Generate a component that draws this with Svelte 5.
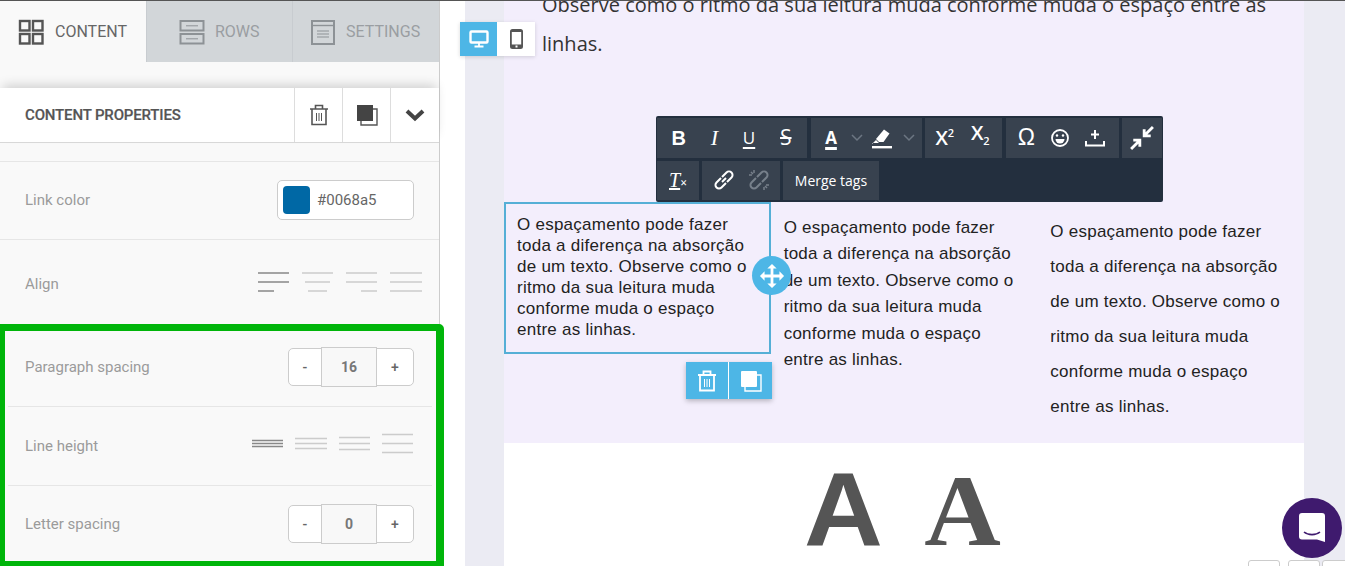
<script>
  const colText = 'O espaçamento pode fazer toda a diferença na absorção de um texto. Observe como o ritmo da sua leitura muda conforme muda o espaço entre as linhas.';
</script>

<div class="page">
  <aside class="panel">
    <nav class="tabs">
      <div class="tab active">
        <svg width="26" height="26" viewBox="0 0 26 26" fill="none" stroke="#555" stroke-width="2.4"><rect x="2" y="2" width="9.5" height="9.5"/><rect x="15" y="2" width="9.5" height="9.5"/><rect x="2" y="15" width="9.5" height="9.5"/><rect x="15" y="15" width="9.5" height="9.5"/></svg>
        <span>CONTENT</span>
      </div>
      <div class="tab">
        <svg width="26" height="26" viewBox="0 0 26 26" fill="none" stroke="#8d9296" stroke-width="2"><rect x="1.5" y="2" width="23" height="9.5"/><rect x="1.5" y="15" width="23" height="9.5"/><path d="M7 6.8h12M7 19.8h12" stroke-width="1"/></svg>
        <span>ROWS</span>
      </div>
      <div class="tab">
        <svg width="26" height="26" viewBox="0 0 26 26" fill="none" stroke="#8d9296" stroke-width="2"><rect x="2" y="2" width="22" height="23"/><path d="M2 6.5h22" stroke-width="1.4"/><path d="M7 12h12M7 15h12M7 18h12" stroke-width="1"/></svg>
        <span>SETTINGS</span>
      </div>
    </nav>

    <header class="props">
      <strong>CONTENT PROPERTIES</strong>
      <div class="act">
        <svg width="20" height="22" viewBox="0 0 20 22" fill="none" stroke="#555" stroke-width="1.6"><path d="M1 5h18M6.500 5V1.500h7V5M3 5v15.500h14V5"/><path d="M7.500 9v8M10 9v8M12.500 9v8" stroke-width="1"/></svg>
      </div>
      <div class="act">
        <svg width="22" height="22" viewBox="0 0 22 22"><path d="M5 5h16v16H5z" fill="none" stroke="#555" stroke-width="1.400"/><rect x="1" y="1" width="16" height="16" fill="#444"/></svg>
      </div>
      <div class="act">
        <svg width="20" height="14" viewBox="0 0 20 14" fill="none" stroke="#444" stroke-width="4"><path d="M2 3l8 7.500L18 3"/></svg>
      </div>
    </header>

    <div class="spacer"></div>

    <section class="row r78 up">
      <label>Link color</label>
      <div class="color"><i></i><span>#0068a5</span></div>
    </section>

    <section class="row r89 up">
      <label>Align</label>
      <div class="aligns">
        <svg width="32" height="20" viewBox="0 0 32 20" stroke="#888" stroke-width="1.600"><path d="M0 1h31M0 10h31M0 19h16"/></svg>
        <svg width="32" height="20" viewBox="0 0 32 20" stroke="#ccc" stroke-width="1.600"><path d="M0 1h31M3 10h25M6 19h19"/></svg>
        <svg width="32" height="20" viewBox="0 0 32 20" stroke="#ccc" stroke-width="1.600"><path d="M0 1h31M0 10h31M15 19h16"/></svg>
        <svg width="32" height="20" viewBox="0 0 32 20" stroke="#ccc" stroke-width="1.600"><path d="M0 1h32M0 10h32M0 19h32"/></svg>
      </div>
    </section>

    <section class="row r78 inset up">
      <label>Paragraph spacing</label>
      <div class="stepper"><button>-</button><b>16</b><button>+</button></div>
    </section>

    <section class="row r79 inset">
      <label>Line height</label>
      <div class="heights">
        <svg width="32" height="10" viewBox="0 0 32 10" stroke="#888" stroke-width="1.600"><path d="M0 1.500h31M0 4.500h31M0 7.500h31"/></svg>
        <svg width="33" height="14" viewBox="0 0 33 14" stroke="#ccc" stroke-width="1.600"><path d="M0 1.500h32M0 6.500h32M0 11.500h32"/></svg>
        <svg width="32" height="16" viewBox="0 0 32 16" stroke="#ccc" stroke-width="1.600"><path d="M0 1.500h31M0 7.500h31M0 13.500h31"/></svg>
        <svg width="32" height="21" viewBox="0 0 32 21" stroke="#ccc" stroke-width="1.600"><path d="M0 1.500h31M0 10.500h31M0 19.500h31"/></svg>
      </div>
    </section>

    <section class="row r78 inset last up">
      <label>Letter spacing</label>
      <div class="stepper"><button>-</button><b>0</b><button>+</button></div>
    </section>
  </aside>

  <main class="canvas">
    <div class="content">
      <div class="intro">
        <p>Observe como o ritmo da sua leitura muda conforme muda o espaço entre as linhas.</p>
      </div>
      <div class="cols">
        <div class="col c1"><p>{colText}</p></div>
        <div class="col c2"><p>{colText}</p></div>
        <div class="col c3"><p>{colText}</p></div>
      </div>
      <div class="letters"><span class="sans">A</span><span class="serif">A</span></div>
    </div>
  </main>

  <div class="devices">
    <div class="dev on">
      <svg width="20" height="18" viewBox="0 0 20 18" fill="none" stroke="#fff" stroke-width="2.400"><rect x="1.500" y="1.500" width="17" height="11" rx="1"/><path d="M10 13v3M5.500 16.500h9" stroke-width="1.800"/></svg>
    </div>
    <div class="dev">
      <svg width="13" height="20" viewBox="0 0 13 20"><path fill-rule="evenodd" fill="#555" d="M2.500 0h8A2.500 2.500 0 0 1 13 2.500v15a2.500 2.500 0 0 1-2.500 2.500h-8A2.500 2.500 0 0 1 0 17.500v-15A2.500 2.500 0 0 1 2.500 0zM1.800 3v12.500h9.400V3z"/><rect x="5.500" y="16.500" width="2" height="2" fill="#fff"/></svg>
    </div>
  </div>

  <div class="toolbar">
    <div class="tb-row">
      <div class="grp g1"><span class="bt b">B</span><span class="bt it">I</span><span class="bt u">U</span><span class="bt s">S</span></div>
      <div class="grp g2">
        <span class="bt u2">A</span>
        <svg class="chev" width="12" height="8" viewBox="0 0 12 8" fill="none" stroke="#6c7682" stroke-width="1.500"><path d="M1 1l5 5 5-5"/></svg>
        <svg class="pen" width="22" height="22" viewBox="0 0 22 22"><path d="M5 12L13 2.500l5.500 4-6 8.500H8z" fill="#fff"/><path d="M1 17l4-4 3 3H1z" fill="#fff"/><rect x="1" y="19" width="20" height="2.400" fill="#fff"/></svg>
        <svg class="chev" width="12" height="8" viewBox="0 0 12 8" fill="none" stroke="#6c7682" stroke-width="1.500"><path d="M1 1l5 5 5-5"/></svg>
      </div>
      <div class="grp g3"><span class="bt sc">X<sup>2</sup></span><span class="bt sc raised">X<sub>2</sub></span></div>
      <div class="grp g4">
        <span class="bt om">Ω</span>
        <svg width="20" height="20" viewBox="0 0 20 20" fill="none" stroke="#fff" stroke-width="1.800"><circle cx="10" cy="10" r="8"/><circle cx="7" cy="7.500" r="1.200" fill="#fff" stroke="none"/><circle cx="13" cy="7.500" r="1.200" fill="#fff" stroke="none"/><path d="M5.500 11h9a4.500 4.500 0 0 1-9 0z" fill="#fff" stroke="none"/></svg>
        <svg width="20" height="20" viewBox="0 0 20 20" fill="none" stroke="#fff" stroke-width="2"><path d="M10 2v9M6 6.500h8M1 13v4.500h18V13"/></svg>
      </div>
      <div class="grp g5">
        <svg width="24" height="24" viewBox="0 0 22 22" fill="none" stroke="#fff" stroke-width="2.600"><path d="M21 1l-8 8M13 3v6h6M1 21l8-8M3 13h6v6"/></svg>
      </div>
    </div>
    <div class="tb-row">
      <div class="grp g6"><span class="bt tx"><u>T</u><small>×</small></span></div>
      <div class="grp g7">
        <svg width="22" height="22" viewBox="0 0 22 22" fill="none" stroke="#fff" stroke-width="2"><path d="M9 13l4-4"/><path d="M8 9l-4.500 4.500a3.500 3.500 0 0 0 5 5L13 14"/><path d="M14 13l4.500-4.500a3.500 3.500 0 0 0-5-5L9 8"/></svg>
        <svg width="22" height="22" viewBox="0 0 22 22" fill="none" stroke="#77808b" stroke-width="2"><path d="M8 9l-4.500 4.500a3.500 3.500 0 0 0 5 5L13 14"/><path d="M14 13l4.500-4.500a3.500 3.500 0 0 0-5-5L9 8"/><path d="M6 1v3M1 6h3M16 18v3M18 16h3M3 3l2 2M17 17l2 2" stroke-width="1.500"/></svg>
      </div>
      <div class="grp g8">Merge tags</div>
    </div>
  </div>

  <div class="move">
    <svg width="26" height="26" viewBox="0 0 28 28" fill="#fff"><path d="M14 1l5 5h-3.500v6.500H22V9l5 5-5 5v-3.500h-6.500V22H19l-5 5-5-5h3.500v-6.500H6V19l-5-5 5-5v3.500h6.500V6H9z"/></svg>
  </div>

  <div class="blockacts">
    <div class="ba">
      <svg width="20" height="22" viewBox="0 0 20 22" fill="none" stroke="#fff" stroke-width="1.800"><path d="M1 5h18M6.500 5V1.500h7V5M3 5v15.500h14V5"/><path d="M7.500 9v8M10 9v8M12.500 9v8" stroke-width="1"/></svg>
    </div>
    <div class="ba">
      <svg width="22" height="22" viewBox="0 0 22 22"><path d="M5 5h16v16H5z" fill="none" stroke="#fff" stroke-width="1.400"/><rect x="1" y="1" width="16" height="16" rx="1" fill="#fff"/></svg>
    </div>
  </div>

  <div class="highlight"></div>

  <div class="mini m1"></div>
  <div class="mini m2"></div>
  <div class="mini m3"></div>

  <div class="chat">
    <svg width="28" height="32" viewBox="0 0 28 32"><path d="M4 1h20a3 3 0 0 1 3 3v26l-8-2.500H4a3 3 0 0 1-3-3V4a3 3 0 0 1 3-3z" fill="#fff"/><path d="M6 20c4 3.500 12 3.500 16 0" fill="none" stroke="#3f1a6e" stroke-width="1.600"/></svg>
  </div>
</div>

<style>
  :global(body) { margin: 0; background: #fff; }
  .page {
    position: relative;
    display: flex;
    width: 1345px;
    height: 566px;
    overflow: hidden;
    font-family: Roboto, sans-serif;
    border-top: 1px solid #555;
    box-sizing: border-box;
  }
  .panel {
    width: 440px;
    flex: none;
    box-sizing: border-box;
    background: #f9f9f9;
    border-right: 1px solid #ccc;
    display: flex;
    flex-direction: column;
  }
  .tabs { display: flex; height: 61px; flex: none; }
  .tab {
    display: flex;
    align-items: center;
    gap: 10px;
    background: #d2d6d9;
    color: #9a9ea2;
    font-size: 16px;
    padding-left: 32px;
    width: 146px;
    box-sizing: border-box;
    border-left: 1px solid #c8ccd0;
  }
  .tab:last-child { flex: 1; padding-left: 17px; }
  .tab.active { background: #f9f9f9; color: #666; padding-left: 18px; border-left: 0; gap: 11px; }
  .props {
    margin-top: 26px;
    height: 55px;
    flex: none;
    box-sizing: border-box;
    display: flex;
    align-items: stretch;
    background: #fff;
    border-bottom: 1px solid #d8d8d8;
    box-shadow: 0 -6px 10px -3px rgba(0,0,0,.16);
  }
  .props strong { flex: 1; align-self: center; padding-left: 25px; font-size: 15px; font-weight: 500; color: #555; -webkit-text-stroke: .2px #555; letter-spacing: -.15px; }
  .act { width: 48px; box-sizing: border-box; flex: none; display: flex; align-items: center; justify-content: center; border-left: 1px solid #ddd; }
  .act:last-child { width: 49px; }
  .spacer { height: 18px; flex: none; border-bottom: 1px solid #e6e6e6; }
  .row {
    flex: none;
    display: flex;
    align-items: center;
    justify-content: space-between;
    padding: 0 25px;
    box-sizing: border-box;
    border-bottom: 1px solid #e6e6e6;
  }
  .row.up { padding-bottom: 2px; }
  .row label { font-size: 15px; color: #9b9b9b; }
  .r78 { height: 78px; }
  .r89 { height: 89px; border-bottom: 0; }
  .r79 { height: 79px; }
  .row.last { border-bottom: 0; }
  .inset { margin: 0 7px 0 8px; padding-left: 17px; padding-right: 18px; }
  .row.inset { padding-left: 17px; padding-right: 18px; }
  .color {
    width: 137px;
    height: 40px;
    box-sizing: border-box;
    display: flex;
    align-items: center;
    gap: 7px;
    padding-left: 5px;
    background: #fff;
    border: 1px solid #ccc;
    border-radius: 5px;
    color: #666;
    font-size: 15px;
  }
  .color i { width: 27px; height: 28px; border-radius: 4px; background: #0068a5; }
  .aligns { display: flex; gap: 12px; margin-top: -4px; margin-right: -8px; }
  .heights { display: flex; gap: 11px; align-items: center; margin-top: -5px; }
  .aligns svg, .heights svg { display: block; }
  .stepper {
    display: flex;
    width: 126px;
    height: 38px;
    box-sizing: border-box;
    border: 1px solid #ccc;
    border-radius: 5px;
    background: #fff;
    align-items: stretch;
  }
  .stepper button {
    border: 0;
    background: none;
    padding: 0;
    font: 500 14px Roboto, sans-serif;
    color: #666;
  }
  .stepper button:first-child { width: 32px; }
  .stepper button:last-child { flex: 1; }
  .stepper b {
    width: 56px;
    margin: -2px 0;
    flex: none;
    box-sizing: border-box;
    border: 1px solid #ccc;
    background: #f8f8f8;
    display: flex;
    align-items: center;
    justify-content: center;
    font-size: 14px;
    font-weight: 700;
    color: #777;
  }
  .canvas {
    flex: 1;
    min-width: 0;
    overflow: hidden;
    padding-left: 25px;
  }
  .content {
    margin-left: 39px;
    width: 800px;
    height: 100%;
    background: #fff;
    box-shadow: -39px 0 0 #ebebf3, 41px 0 0 #ebebf3;
    display: flex;
    flex-direction: column;
  }
  .intro { height: 201px; flex: none; background: #f3eefc; overflow: hidden; }
  .intro p {
    margin: -16px 30px 0 38px;
    font: 20px/39px "Open Sans", sans-serif;
    color: #333;
  }
  .cols { display: flex; height: 241px; flex: none; background: #f3eefc; }
  .col { width: 33.333%; box-sizing: border-box; }
  .col p { margin: 0; font-family: "Liberation Sans", Arial, sans-serif; font-size: 17px; letter-spacing: .25px; color: #222; }
  .c1 { height: 152px; padding: 10px 15px 0 11px; border: 2px solid #55afd6; }
  .c2 { padding: 13px 20px 0 13px; }
  .c3 { padding: 12px 20px 0 13px; }
  .c1 p { line-height: 21px; }
  .c2 p { line-height: 26.400px; }
  .c3 p { line-height: 35px; }
  .letters {
    flex: 1;
    background: #fff;
    display: flex;
    justify-content: center;
    align-items: baseline;
    color: #555;
    gap: 44px;
    min-height: 0;
    padding-right: 3px;
  }
  .letters span { display: block; margin-top: 21px; }
  .sans { font: 700 104px/90px "Liberation Sans", sans-serif; transform: scaleX(1.05); }
  .serif { font: 700 101px/90px "Liberation Serif", serif; transform: scaleX(1.05); }

  .devices {
    position: absolute; left: 460px; top: 21px; display: flex; height: 34px;
    box-shadow: 0 1px 4px rgba(0,0,0,.15);
  }
  .dev { width: 38px; display: flex; align-items: center; justify-content: center; background: #fff; }
  .dev.on { width: 37px; background: #4db6e6; }
  .toolbar {
    position: absolute; left: 656px; top: 115px; width: 507px; height: 86px;
    box-sizing: border-box;
    background: #232f3e;
    border-radius: 2px;
    padding: 2px 1px;
    display: flex;
    flex-direction: column;
    gap: 3px;
    color: #fff;
  }
  .tb-row { display: flex; height: 40px; gap: 3px; }
  .grp { display: flex; align-items: center; justify-content: space-around; background: #38424f; box-sizing: border-box; }
  .g1 { width: 150px; padding: 0 3px 0 2px; }
  .g2 { width: 111px; padding-left: 10px; margin-left: 1px; justify-content: flex-start; }
  .g2 .chev { margin-left: 10px; }
  .g2 .pen { margin-left: 8px; }
  .g3 { width: 77px; padding: 0 4px 0 2px; }
  .g4 { width: 113px; padding: 0 6px 0 4px; margin-left: 1px; }
  .g5 { flex: 1; }
  .g6 { width: 42px; }
  .g7 { width: 78px; padding: 0 4px; }
  .g8 { width: 96px; font: 14px "Open Sans", sans-serif; color: #fff; }
  .bt { font-family: "Open Sans", sans-serif; color: #fff; font-size: 19px; line-height: 1; }
  .b { font-weight: 700; font-family: "Liberation Sans", sans-serif; font-size: 20px; }
  .it { font-family: "Liberation Serif", serif; font-style: italic; font-size: 22px; }
  .u { text-decoration: underline; text-underline-offset: 3px; font-size: 17px; text-decoration-thickness: 2px; }
  .s { text-decoration: line-through; text-decoration-thickness: 2px; font-size: 21px; }
  .u2 { width: 20px; text-align: center; text-decoration: underline; text-decoration-thickness: 3px; text-underline-offset: 3px; font-weight: 700; font-size: 17px; }
  .sc { font-size: 20px; font-weight: 600; }
  .sc sup, .sc sub { font-size: 11px; font-weight: 600; }
  .sc.raised { margin-top: -6px; }
  .om { font-size: 23px; font-family: "Liberation Sans", sans-serif; }
  .tx { font-family: "Liberation Serif", serif; font-style: italic; font-size: 20px; }
  .tx small { font-size: 12px; font-style: normal; font-weight: 700; }
  .move {
    position: absolute; left: 752px; top: 255px; width: 39px; height: 39px; border-radius: 50%;
    background: #4db6e6; display: flex; align-items: center; justify-content: center;
  }
  .blockacts {
    position: absolute; left: 686px; top: 361px; height: 37px; display: flex; gap: 1px;
    box-shadow: 0 2px 5px rgba(0,0,0,.25);
    background: #fff;
  }
  .ba { width: 42px; background: #4db6e6; display: flex; align-items: center; justify-content: center; }
  .ba:last-child { width: 43px; }
  .highlight {
    position: absolute; left: 0; top: 323px; width: 444px; height: 242px;
    box-sizing: border-box;
    border: solid #00b50a;
    border-width: 7px 8px 5px 5px;
    border-top-right-radius: 5px;
    pointer-events: none;
  }
  .mini { position: absolute; top: 559px; height: 20px; width: 32px; background: #fff; border: 1px solid #ccc; border-radius: 3px; box-sizing: border-box; }
  .m1 { left: 1248px; }
  .m2 { left: 1288px; }
  .m3 { left: 1322px; }
  .chat {
    position: absolute; left: 1282px; top: 497px; width: 60px; height: 60px; border-radius: 50%;
    background: #3f1a6e; display: flex; align-items: center; justify-content: center;
  }
</style>
